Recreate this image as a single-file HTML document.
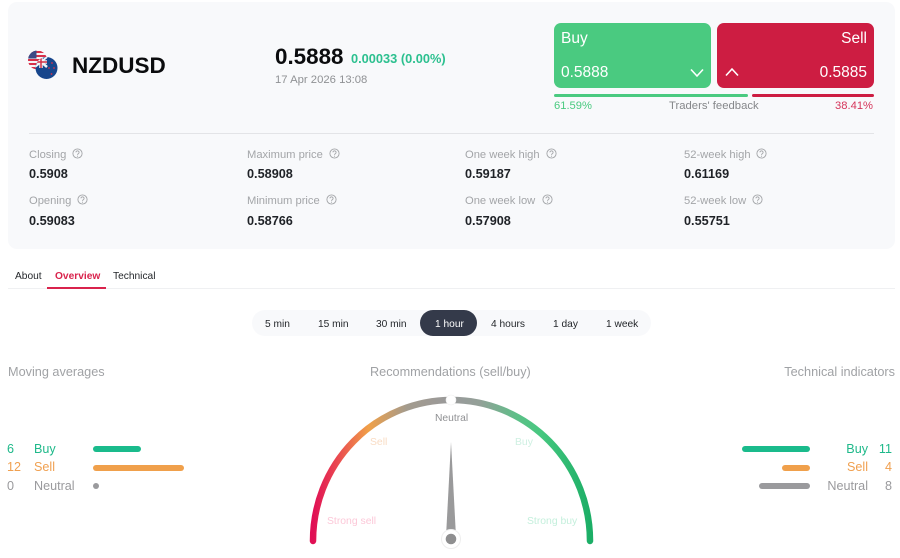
<!DOCTYPE html>
<html><head><meta charset="utf-8"><style>
html,body{margin:0;padding:0;background:#fff}
body{width:900px;height:558px;position:relative;overflow:hidden;font-family:"Liberation Sans",sans-serif;color:#1f2227}
.t{position:absolute;white-space:nowrap;line-height:16px}
.r{text-align:right}
.b{position:absolute}
.lbl{font-size:11.2px;color:#a3a5a8}
.val{font-size:12.7px;font-weight:bold;color:#1f2227}
.tf{font-size:10.2px;color:#24272b;top:317px}
.h{font-size:12.7px;color:#a0a2a5}
.n{font-size:12.6px}
svg.q{position:absolute;width:11px;height:11px}
</style></head><body>
<div class="b" style="left:8px;top:2px;width:887px;height:247px;background:#f8f9fb;border-radius:9px"></div>

<svg class="b" style="left:26px;top:48px" width="36" height="36" viewBox="0 0 36 36">
<defs><clipPath id="us"><circle cx="11.5" cy="12" r="9.5"/></clipPath><clipPath id="nz"><circle cx="20.5" cy="20" r="11"/></clipPath></defs>
<g clip-path="url(#us)"><rect x="2" y="2" width="20" height="20" fill="#f4f4f6"/>
<rect x="2" y="3" width="20" height="2" fill="#d8304a"/><rect x="2" y="7" width="20" height="2" fill="#d8304a"/><rect x="2" y="11" width="20" height="2" fill="#d8304a"/><rect x="2" y="15" width="20" height="2" fill="#d8304a"/><rect x="2" y="19" width="20" height="2" fill="#d8304a"/>
<rect x="2" y="2" width="8.500" height="8.500" fill="#3c4a86"/></g>
<g clip-path="url(#nz)"><rect x="9" y="9" width="23" height="23" fill="#17468c"/>
<path d="M8 8l13 11" stroke="#f3f3f5" stroke-width="2.500"/><path d="M21 9L9 19" stroke="#f3f3f5" stroke-width="2"/><path d="M15 8v12M8 14h13" stroke="#f3f3f5" stroke-width="3.500"/><path d="M15 8v12M8 14h13" stroke="#d22f45" stroke-width="1.500"/>
<circle cx="26" cy="15" r=".9" fill="#d8304a"/><circle cx="23" cy="20" r=".9" fill="#d8304a"/><circle cx="28" cy="20" r=".9" fill="#d8304a"/><circle cx="25.500" cy="26" r=".9" fill="#d8304a"/></g>
</svg>
<div class="t" style="left:72px;top:52px;line-height:28px;font-size:22.5px;font-weight:bold;color:#0b0c0e">NZDUSD</div>
<div class="t" style="left:275px;top:43px;line-height:28px;font-size:22.4px;font-weight:bold;color:#0b0c0e">0.5888</div>
<div class="t" style="left:351px;top:51px;font-size:12.8px;font-weight:bold;color:#2cc08f">0.00033 (0.00%)</div>
<div class="t" style="left:275px;top:72px;font-size:11.3px;color:#8f9194">17 Apr 2026 13:08</div>

<div class="b" style="left:554px;top:23px;width:157px;height:65px;background:#4aca80;border-radius:7px"></div>
<div class="b" style="left:717px;top:23px;width:157px;height:65px;background:#cd1d42;border-radius:7px"></div>
<div class="t" style="left:561px;top:29px;line-height:20px;font-size:15.500px;color:#fff">Buy</div>
<div class="t r" style="right:33px;top:29px;line-height:20px;font-size:15.500px;color:#fff">Sell</div>
<div class="t" style="left:561px;top:63px;line-height:20px;font-size:15.500px;color:#fff">0.5888</div>
<div class="t r" style="right:33px;top:63px;line-height:20px;font-size:15.500px;color:#fff">0.5885</div>
<svg class="b" style="left:689px;top:68px" width="16" height="10" viewBox="0 0 16 10"><path d="M2 1.500L8 8l6-6.500" fill="none" stroke="#fff" stroke-width="1.600"/></svg>
<svg class="b" style="left:724px;top:67px" width="16" height="10" viewBox="0 0 16 10"><path d="M2 8.500L8 2l6 6.500" fill="none" stroke="#fff" stroke-width="1.600"/></svg>
<div class="b" style="left:554px;top:94px;width:194px;height:3px;background:#4aca80;border-radius:2px"></div>
<div class="b" style="left:752px;top:94px;width:122px;height:3px;background:#cd1d42;border-radius:2px"></div>
<div class="t" style="left:554px;top:98px;font-size:11.2px;color:#4aca80">61.59%</div>
<div class="t" style="left:669px;top:98px;font-size:11.3px;color:#85878a">Traders' feedback</div>
<div class="t r" style="right:27px;top:98px;font-size:11.2px;color:#d5355a">38.41%</div>

<div class="b" style="left:29px;top:133px;width:845px;height:1px;background:#e3e4e7"></div>

<div class="t lbl" style="left:29px;top:147px">Closing</div>
<div class="t val" style="left:29px;top:166px">0.5908</div>
<div class="t lbl" style="left:29px;top:193px">Opening</div>
<div class="t val" style="left:29px;top:213px">0.59083</div>
<div class="t lbl" style="left:247px;top:147px">Maximum price</div>
<div class="t val" style="left:247px;top:166px">0.58908</div>
<div class="t lbl" style="left:247px;top:193px">Minimum price</div>
<div class="t val" style="left:247px;top:213px">0.58766</div>
<div class="t lbl" style="left:465px;top:147px">One week high</div>
<div class="t val" style="left:465px;top:166px">0.59187</div>
<div class="t lbl" style="left:465px;top:193px">One week low</div>
<div class="t val" style="left:465px;top:213px">0.57908</div>
<div class="t lbl" style="left:684px;top:147px">52-week high</div>
<div class="t val" style="left:684px;top:166px">0.61169</div>
<div class="t lbl" style="left:684px;top:193px">52-week low</div>
<div class="t val" style="left:684px;top:213px">0.55751</div>

<svg width="0" height="0" style="position:absolute"><defs><g id="qm"><circle cx="5.500" cy="5.500" r="4.600" fill="none" stroke="#a3a5a8" stroke-width=".9"/><path d="M3.900 4.300a1.600 1.500 0 1 1 2.500 1.300c-.6.400-.9.600-.9 1.300" fill="none" stroke="#a3a5a8" stroke-width=".9"/><circle cx="5.500" cy="8.200" r=".55" fill="#a3a5a8"/></g></defs></svg>
<svg class="q" style="left:72px;top:148px"><use href="#qm"/></svg>
<svg class="q" style="left:77px;top:194px"><use href="#qm"/></svg>
<svg class="q" style="left:329px;top:148px"><use href="#qm"/></svg>
<svg class="q" style="left:326px;top:194px"><use href="#qm"/></svg>
<svg class="q" style="left:546px;top:148px"><use href="#qm"/></svg>
<svg class="q" style="left:542px;top:194px"><use href="#qm"/></svg>
<svg class="q" style="left:756px;top:148px"><use href="#qm"/></svg>
<svg class="q" style="left:752px;top:194px"><use href="#qm"/></svg>

<div class="t" style="left:15px;font-size:10.200px;color:#24272b;top:269px">About</div>
<div class="t" style="left:55px;font-size:10.200px;font-weight:bold;color:#d9234c;top:269px">Overview</div>
<div class="t" style="left:113px;font-size:10.200px;color:#24272b;top:269px">Technical</div>
<div class="b" style="left:8px;top:288px;width:887px;height:1px;background:#eff0f2"></div>
<div class="b" style="left:47px;top:287px;width:59px;height:2px;background:#d9234c"></div>

<div class="b" style="left:252px;top:310px;width:399px;height:26px;background:#f8f9fb;border-radius:13px"></div>
<div class="b" style="left:420px;top:310px;width:57px;height:26px;background:#343a4a;border-radius:13px"></div>
<div class="t tf" style="left:265px">5 min</div>
<div class="t tf" style="left:318px">15 min</div>
<div class="t tf" style="left:376px">30 min</div>
<div class="t tf" style="left:435px;color:#fff">1 hour</div>
<div class="t tf" style="left:491px">4 hours</div>
<div class="t tf" style="left:553px">1 day</div>
<div class="t tf" style="left:606px">1 week</div>

<div class="t h" style="left:8px;top:364px">Moving averages</div>
<div class="t h" style="left:370px;top:364px">Recommendations (sell/buy)</div>
<div class="t h r" style="right:5px;top:364px">Technical indicators</div>

<div class="t n" style="left:7px;top:441px;color:#1fb98a">6</div>
<div class="t n" style="left:34px;top:441px;color:#1fb98a">Buy</div>
<div class="b" style="left:93px;top:446px;width:48px;height:6px;border-radius:3px;background:#1abb8c"></div>
<div class="t n" style="left:7px;top:459px;color:#f0a050">12</div>
<div class="t n" style="left:34px;top:459px;color:#f0a050">Sell</div>
<div class="b" style="left:93px;top:465px;width:91px;height:6px;border-radius:3px;background:#f0a04b"></div>
<div class="t n" style="left:7px;top:478px;color:#9a9a9d">0</div>
<div class="t n" style="left:34px;top:478px;color:#9a9a9d">Neutral</div>
<div class="b" style="left:93px;top:483px;width:6px;height:6px;border-radius:3px;background:#9a9a9d"></div>

<div class="b" style="left:742px;top:446px;width:68px;height:6px;border-radius:3px;background:#1abb8c"></div>
<div class="t n r" style="right:32px;top:441px;color:#1fb98a">Buy</div>
<div class="t n r" style="right:8px;top:441px;color:#1fb98a">11</div>
<div class="b" style="left:782px;top:465px;width:28px;height:6px;border-radius:3px;background:#f0a04b"></div>
<div class="t n r" style="right:32px;top:459px;color:#f0a050">Sell</div>
<div class="t n r" style="right:8px;top:459px;color:#f0a050">4</div>
<div class="b" style="left:759px;top:483px;width:51px;height:6px;border-radius:3px;background:#9a9a9d"></div>
<div class="t n r" style="right:32px;top:478px;color:#9a9a9d">Neutral</div>
<div class="t n r" style="right:8px;top:478px;color:#9a9a9d">8</div>

<svg class="b" style="left:300px;top:385px" width="300" height="173" viewBox="300 385 300 173">
<defs><linearGradient id="g" gradientUnits="userSpaceOnUse" x1="313" y1="0" x2="590" y2="0">
<stop offset="0" stop-color="#e00f55"/><stop offset=".09" stop-color="#ea4a50"/><stop offset=".2" stop-color="#f0a048"/><stop offset=".34" stop-color="#a39b8e"/><stop offset=".5" stop-color="#999a9b"/><stop offset=".6" stop-color="#94a098"/><stop offset=".74" stop-color="#5cc088"/><stop offset=".82" stop-color="#47c880"/><stop offset="1" stop-color="#1cae66"/></linearGradient></defs>
<path d="M313 541 A138.500 141 0 0 1 590 541" fill="none" stroke="url(#g)" stroke-width="6.500" stroke-linecap="round"/>
<circle cx="451" cy="400" r="5" fill="#fff" stroke="#eee" stroke-width=".6"/>
<path d="M451 442L455.700 531H446.300Z" fill="#9a9a9b"/>
<circle cx="451" cy="539" r="9.500" fill="#fff" stroke="#eeeeee" stroke-width="1"/>
<circle cx="451" cy="539" r="5.300" fill="#8f8f90"/>
</svg>
<div class="t" style="left:435px;top:411px;font-size:10.300px;color:#8f9093">Neutral</div>
<div class="t" style="left:370px;top:435px;font-size:10.400px;color:#f9dcc4">Sell</div>
<div class="t" style="left:515px;top:435px;font-size:10.400px;color:#cff0e2">Buy</div>
<div class="t" style="left:327px;top:514px;font-size:10.400px;color:#fcc8d8">Strong sell</div>
<div class="t" style="left:527px;top:514px;font-size:10.400px;color:#c4efdc">Strong buy</div>
</body></html>
